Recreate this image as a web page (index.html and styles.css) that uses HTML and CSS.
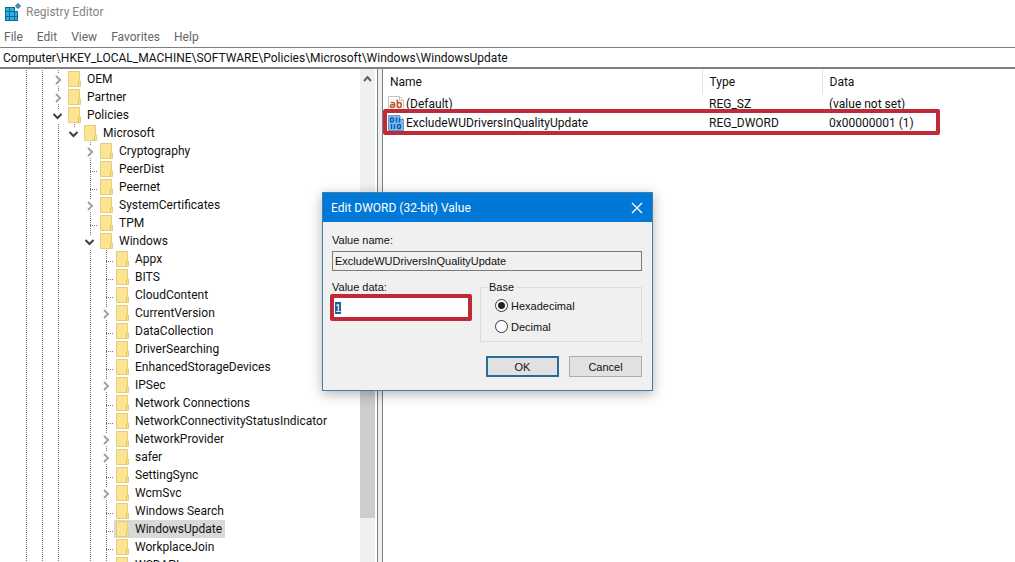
FILE: index.html
```html
<!DOCTYPE html>
<html lang="en">
<head>
<meta charset="utf-8">
<title>Registry Editor</title>
<link rel="stylesheet" href="styles.css">
</head>
<body>
<div class="app">
  <header class="titlebar">
    <svg class="app-icon" width="18" height="18" viewBox="0 0 18 18" aria-hidden="true">
      <path d="M1 4h10v4h3v10H1z" fill="#0b6a94"/>
      <path d="M2 5h3v3H2zM6 5h4v3H6zM2 9h3v4H2zM6 9h4v4H6zM11 9h2v4h-2zM2 14h3v3H2zM6 14h4v3H6zM11 14h2v3h-2z" fill="#2cb1e0"/>
      <path d="M14 0l3 3-3 3-3-3z" fill="#1c7ba4"/>
      <path d="M14 2l1 1-1 1-1-1z" fill="#8fd8f2"/>
    </svg>
    <h1 class="app-title">Registry Editor</h1>
  </header>
  <nav class="menubar">
    <button class="menu">File</button>
    <button class="menu">Edit</button>
    <button class="menu">View</button>
    <button class="menu">Favorites</button>
    <button class="menu">Help</button>
  </nav>
  <input class="address" type="text" aria-label="Address" value="Computer\HKEY_LOCAL_MACHINE\SOFTWARE\Policies\Microsoft\Windows\WindowsUpdate">
  <main class="panes">
    <div class="tree-pane">
      <ul class="tree" id="tree" role="tree" aria-label="Keys"></ul>
      <div class="scrollbar" aria-hidden="true">
        <svg class="scroll-up" width="15" height="18" viewBox="0 0 15 18"><path d="M4 12l3.500-4 3.500 4" fill="none" stroke="#606060" stroke-width="2"/></svg>
        <div class="thumb"></div>
      </div>
    </div>
    <section class="list-pane">
      <table class="values">
        <thead>
          <tr><th class="col-name">Name</th><th class="col-type">Type</th><th>Data</th></tr>
        </thead>
        <tbody>
          <tr>
            <td class="name"><span class="cell">
              <svg width="16" height="16" viewBox="0 0 16 16" aria-hidden="true"><path d="M.5.500h11l4 4v11H.500z" fill="#fff" stroke="#c4c4c4"/><path d="M11.500.500v4h4" fill="none" stroke="#c4c4c4"/><g fill="none" stroke="#c0582c" stroke-width="1.600"><path d="M2.500 6.500h2.500q1.500 0 1.500 1.500v3.500M6.500 8.700H4q-1.700 0-1.700 1.400T4 11.400q1.700 0 2.500-1"/><path d="M9.300 3.500v8M9.300 8.900q0-2.400 2-2.400t2 2.500-2 2.500-2-2.600"/></g></svg>
              (Default)</span></td>
            <td>REG_SZ</td><td>(value not set)</td>
          </tr>
          <tr>
            <td class="name"><span class="cell">
              <svg width="16" height="16" viewBox="0 0 16 16" aria-hidden="true"><path d="M.5.500h11l4 4v11H.500z" fill="#7dbcec" stroke="#5c9bd0"/><path d="M11.500.500v4h4" fill="#d5ebfa" stroke="#5c9bd0"/><g fill="none" stroke="#0a5cb8" stroke-width="1.500"><rect x="2.500" y="3" width="3" height="4" rx="1.300"/><path d="M8.500 2.500v5M11.500 3v4.500M3.500 9v5M6.500 9v5"/><rect x="9.500" y="9.500" width="3" height="4" rx="1.300"/></g></svg>
              ExcludeWUDriversInQualityUpdate</span></td>
            <td>REG_DWORD</td><td>0x00000001 (1)</td>
          </tr>
        </tbody>
      </table>
      <div class="row-marker"></div>
    </section>
  </main>

  <form class="dialog" role="dialog" aria-labelledby="dialog-title">
    <div class="dialog-bar">
      <h2 class="dialog-title" id="dialog-title">Edit DWORD (32-bit) Value</h2>
      <button class="close" type="button" aria-label="Close"><svg width="12" height="12" viewBox="0 0 12 12"><path d="M1 1l10 10M11 1L1 11" stroke="#fff" stroke-width="1.300"/></svg></button>
    </div>
    <div class="dialog-body">
      <label class="label" for="value-name">Value name:</label>
      <input class="value-name" id="value-name" type="text" readonly value="ExcludeWUDriversInQualityUpdate">
      <div class="fields">
        <div class="data-field">
          <label class="label" for="value-data">Value data:</label>
          <input class="value-data" id="value-data" type="text" value="1">
        </div>
        <fieldset class="base">
          <legend>Base</legend>
          <label class="option"><input type="radio" name="base" checked>Hexadecimal</label>
          <label class="option"><input type="radio" name="base">Decimal</label>
        </fieldset>
      </div>
      <div class="actions">
        <button class="btn primary" type="button">OK</button>
        <button class="btn" type="button">Cancel</button>
      </div>
    </div>
  </form>
</div>
<script src="tree.js"></script>
</body>
</html>
```
FILE: styles.css
```css
* { box-sizing: border-box; }
body {
  margin: 0;
  background: #fff;
  color: #111;
  font: 12px/18px Roboto, "Open Sans", sans-serif;
}
h1, h2, ul { margin: 0; padding: 0; font: inherit; list-style: none; }
button, input { font: inherit; color: inherit; }
.app { position: relative; height: 100vh; display: flex; flex-direction: column; overflow: hidden; }

.titlebar { display: flex; align-items: center; gap: 4px; height: 24px; padding-left: 4px; flex: none; }
.app-icon { display: block; }
.app-title { color: #858585; }
.menubar { display: flex; align-items: center; gap: 14px; height: 23px; padding: 2px 4px 0; flex: none; }
.menu { padding: 0; border: 0; background: none; color: #666; }
.address {
  flex: none;
  width: 100%;
  height: 22px;
  padding: 0 3px;
  border: solid #808080;
  border-width: 1px 0 2px;
  background: #fff;
  outline: 0;
}

.panes { display: flex; flex: 1; min-height: 0; }
.tree-pane { display: flex; flex: none; width: 378px; padding-right: 2px; border-right: 1px solid #75808a; overflow: hidden; }
.tree { flex: 1; min-width: 0; overflow: hidden; padding: 1px 0 0 18px; }
.node { display: flex; align-items: center; height: 18px; white-space: nowrap; }
.guide { flex: none; width: 16px; height: 18px; }
.guide path { fill: none; stroke: #777; stroke-dasharray: 1 1; }
.guide .arrow { stroke: #a0a0a0; stroke-width: 2; stroke-dasharray: none; }
.guide .arrow.open { stroke: #404040; }
.key { display: flex; align-items: center; gap: 6px; height: 18px; padding: 0 3px 0 2px; }
.folder { flex: none; display: block; }
.selected .key { background: #d9d9d9; }
.scrollbar { flex: none; display: flex; flex-direction: column; width: 15px; background: #f0f0f0; }
.scroll-up { display: block; flex: none; }
.thumb { height: 300px; margin-top: 131px; background: #cdcdcd; }

.list-pane { position: relative; flex: 1; min-width: 0; margin-left: 4px; border-left: 1px solid #75808a; box-shadow: -4px 0 #f0f0f0; }
.values { width: 100%; border-collapse: collapse; table-layout: fixed; }
.values th { height: 25px; padding: 1px 7px 0; font-weight: 400; text-align: left; border-right: 1px solid #e2e2e2; }
.values th:last-child { border-right: 0; }
.values td { height: 19px; padding: 0 7px; white-space: nowrap; }
.values td.name { padding-left: 5px; }
.col-name { width: 319px; }
.col-type { width: 120px; }
.cell { display: flex; align-items: center; gap: 2px; }
.row-marker { position: absolute; left: 0; top: 40px; width: 557px; height: 26px; border: 4px solid #c02a38; border-radius: 2px; }

.dialog {
  position: absolute;
  left: 322px;
  top: 192px;
  width: 331px;
  border: 1px solid #3c7fa8;
  background: #f0f0f0;
  box-shadow: 0 3px 12px rgba(0, 0, 0, .3);
  font: 11px/14px "Liberation Sans", Arial, sans-serif;
}
.dialog-bar { display: flex; align-items: center; justify-content: space-between; height: 29px; padding: 0 9px 0 8px; background: #0078d7; color: #fff; }
.dialog-title { font: 12px/18px Roboto, "Open Sans", sans-serif; }
.close { display: flex; padding: 0; border: 0; background: none; }
.dialog-body { padding: 11px 10px 13px 9px; }
.label { display: block; }
.value-name { display: block; width: 100%; height: 20px; margin-top: 4px; padding: 0 2px; border: 1px solid #7a7a7a; background: #f0f0f0; outline: 0; }
.fields { display: flex; justify-content: space-between; margin-top: 9px; }
.data-field { width: 142px; margin-left: -2px; }
.data-field .label { padding-left: 2px; }
.value-data { display: block; width: 100%; height: 27px; padding: 0 1px; border: 4px solid #c02a38; border-radius: 2px; background: #fff; outline: 0; }
.value-data::selection { background: #1c5f92; color: #fff; }
.base { width: 162px; height: 62px; margin: 0; padding: 1px 14px 6px; border: 1px solid #dcdcdc; }
.base legend { margin-left: -8px; padding: 0 2px; }
.option { display: flex; align-items: center; gap: 3px; height: 21px; }
.option input { appearance: none; width: 13px; height: 13px; margin: 0; border: 1px solid #333; border-radius: 50%; background: #fff; }
.option input:checked { background: radial-gradient(circle, #222 3px, #fff 4px); }
.actions { display: flex; justify-content: flex-end; gap: 10px; margin-top: 14px; }
.btn { width: 73px; height: 21px; padding: 0; border: 1px solid #adadad; background: #e1e1e1; }
.btn.primary { border: 2px solid #2a6d94; }
```
FILE: tree.js
```js
// Each entry: nesting level, state (+ collapsed, - expanded, . leaf), key name
const keys = [
  [0, "+", "OEM"], [0, "+", "Partner"], [0, "-", "Policies"], [1, "-", "Microsoft"],
  [2, "+", "Cryptography"], [2, ".", "PeerDist"], [2, ".", "Peernet"],
  [2, "+", "SystemCertificates"], [2, ".", "TPM"], [2, "-", "Windows"],
  [3, ".", "Appx"], [3, ".", "BITS"], [3, ".", "CloudContent"], [3, "+", "CurrentVersion"],
  [3, ".", "DataCollection"], [3, ".", "DriverSearching"], [3, ".", "EnhancedStorageDevices"],
  [3, "+", "IPSec"], [3, ".", "Network Connections"], [3, ".", "NetworkConnectivityStatusIndicator"],
  [3, "+", "NetworkProvider"], [3, "+", "safer"], [3, ".", "SettingSync"], [3, "+", "WcmSvc"],
  [3, ".", "Windows Search"], [3, ".", "WindowsUpdate"], [3, ".", "WorkplaceJoin"], [3, ".", "WSDAPI"]
];
const guide = inner => `<svg class="guide" viewBox="0 0 16 18" aria-hidden="true">${inner}</svg>`;
const line = '<path d="M8.500 0v18"/>';
const marks = {
  "+": '<path d="M8.500 0v3M8.500 16v2"/><path class="arrow" d="M6 6l4 4-4 4"/>',
  "-": '<path d="M8.500 0v3"/><path class="arrow open" d="M3.500 8l4 4 4-4"/>',
  ".": '<path d="M8.500 0v18M8 11.500h8"/>'
};
const folder = '<svg class="folder" width="13" height="16" viewBox="0 0 13 16" aria-hidden="true"><path d="M.5.500h11v9.500h1v5.500H.500z" fill="#fde491" stroke="#e3cd84"/><path d="M10.500 15v-4.500h1" fill="none" stroke="#dcc068"/></svg>';
document.getElementById("tree").innerHTML = keys.map(([level, state, name]) => {
  let guides = guide(line) + guide(line);
  for (let i = 0; i < level; i++) guides += guide(i === 1 ? "" : line);
  const selected = name === "WindowsUpdate";
  return `<li class="node${selected ? " selected" : ""}" role="treeitem" aria-selected="${selected}">${guides}${guide(marks[state])}<span class="key">${folder}<span>${name}</span></span></li>`;
}).join("");
const data = document.getElementById("value-data");
data.focus();
data.select();
```
